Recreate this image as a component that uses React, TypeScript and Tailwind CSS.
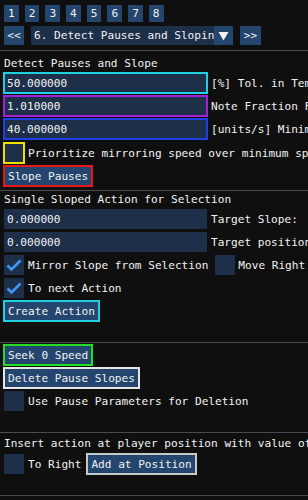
import React from "react";

const FRAME = "bg-[#1d2f49]";
const BTN = "bg-[#24456d]";

function Check() {
  return (
    <svg width="20" height="20" viewBox="0 0 20 20" className="block">
      <polyline points="3.5,10.5 7.5,14.5 16.5,5.5" fill="none" stroke="#4296fa" strokeWidth="2.6" strokeLinecap="butt" strokeLinejoin="miter" />
    </svg>
  );
}

function Box({ checked, outline }: { checked?: boolean; outline?: string }) {
  return (
    <div className={`w-[20px] h-[20px] shrink-0 ${FRAME} ${outline ?? ""}`}>
      {checked ? <Check /> : null}
    </div>
  );
}

function Btn({ children, outline, className }: { children: React.ReactNode; outline?: string; className?: string }) {
  return (
    <div className={`h-[20px] px-[4px] flex items-center whitespace-nowrap shrink-0 ${BTN} ${outline ?? ""} ${className ?? ""}`}>
      {children}
    </div>
  );
}

function Input({ value, label, outline, className }: { value: string; label: string; outline?: string; className?: string }) {
  return (
    <div className={`flex items-center h-[20px] whitespace-nowrap ${className ?? ""}`}>
      <div className={`w-[203px] h-[20px] shrink-0 pl-[3px] flex items-center ${FRAME} ${outline ?? ""}`}>{value}</div>
      <div className="ml-[4px] shrink-0">{label}</div>
    </div>
  );
}

function Sep({ className }: { className?: string }) {
  return <div className={`h-px -ml-[4px] w-[308px] bg-[#4a4a55] shrink-0 ${className ?? ""}`} />;
}

export default function App() {
  return (
    <div
      className="w-[308px] h-[500px] overflow-hidden bg-[#0f0f0f] text-[#f2f2f2] text-[11.1px] leading-[13px] flex flex-col pl-[4px]"
      style={{ fontFamily: '"DejaVu Sans Mono", monospace' }}
    >
      {/* tabs */}
      <div className="mt-[5px] flex gap-[6px] h-[17px]">
        {["1", "2", "3", "4", "5", "6", "7", "8"].map((t) => (
          <div key={t} className={`h-[17px] px-[4px] flex items-center ${BTN}`}>{t}</div>
        ))}
      </div>
      {/* nav */}
      <div className="mt-[4px] flex h-[19px] items-center whitespace-nowrap">
        <div className={`h-[19px] w-[20px] flex items-center justify-center ${BTN}`}>&lt;&lt;</div>
        <div className="ml-[7px] flex h-[19px] w-[202px]">
          <div className={`flex-1 overflow-hidden pl-[3px] flex items-center ${FRAME}`}>6. Detect Pauses and Slopin</div>
          <div className={`w-[19px] h-[19px] flex items-center justify-center ${BTN}`}>
            <svg width="11" height="10" viewBox="0 0 11 10"><polygon points="0.5,1 10.5,1 5.5,9.5" fill="#f2f2f2" /></svg>
          </div>
        </div>
        <div className={`ml-[7px] h-[19px] w-[21px] flex items-center justify-center ${BTN}`}>&gt;&gt;</div>
      </div>
      <Sep className="mt-[5px]" />
      <div className="mt-[6px] h-[13px] whitespace-nowrap">Detect Pauses and Slope</div>
      <Input className="mt-[3px]" value="50.000000" label="[%] Tol. in Tempo" outline="outline-2 outline-[#1fd0e0] -outline-offset-1" />
      <Input className="mt-[3px]" value="1.010000" label="Note Fraction For" outline="outline-2 outline-[#a81fd8] -outline-offset-1" />
      <Input className="mt-[3px]" value="40.000000" label="[units/s] Minimum" outline="outline-2 outline-[#1f3fe8] -outline-offset-1" />
      <div className="mt-[4px] flex items-center h-[20px] whitespace-nowrap">
        <Box outline="outline-2 outline-[#f0e000] -outline-offset-1" />
        <div className="ml-[4px]">Prioritize mirroring speed over minimum speed</div>
      </div>
      <div className="mt-[3px] flex">
        <Btn outline="outline-2 outline-[#e81818] -outline-offset-1">Slope Pauses</Btn>
      </div>
      <Sep className="mt-[4px]" />
      <div className="mt-[2px] h-[13px] whitespace-nowrap">Single Sloped Action for Selection</div>
      <Input className="mt-[3px]" value="0.000000" label="Target Slope:" />
      <Input className="mt-[3px]" value="0.000000" label="Target position" />
      <div className="mt-[3px] flex items-center h-[20px] whitespace-nowrap">
        <Box checked />
        <div className="ml-[4px]">Mirror Slope from Selection</div>
        <div className="ml-[7px]"><Box /></div>
        <div className="ml-[3px]">Move Right</div>
      </div>
      <div className="mt-[3px] flex items-center h-[20px] whitespace-nowrap">
        <Box checked />
        <div className="ml-[4px]">To next Action</div>
      </div>
      <div className="mt-[3px] flex">
        <Btn outline="outline-2 outline-[#1fd0e0] -outline-offset-1">Create Action</Btn>
      </div>
      <Sep className="mt-[21px]" />
      <div className="mt-[2px] flex">
        <Btn outline="outline-2 outline-[#22dd22] -outline-offset-1">Seek 0 Speed</Btn>
      </div>
      <div className="mt-[3px] flex">
        <Btn outline="outline-2 outline-[#e6e6e6] -outline-offset-1">Delete Pause Slopes</Btn>
      </div>
      <div className="mt-[3px] flex items-center h-[20px] whitespace-nowrap">
        <Box />
        <div className="ml-[4px]">Use Pause Parameters for Deletion</div>
      </div>
      <Sep className="mt-[21px]" />
      <div className="mt-[4px] h-[13px] whitespace-nowrap">Insert action at player position with value of</div>
      <div className="mt-[4px] flex items-center h-[20px] whitespace-nowrap">
        <Box />
        <div className="ml-[4px]">To Right</div>
        <div className="ml-[6px]">
          <Btn outline="outline-2 outline-[#c8c8c8] -outline-offset-1">Add at Position</Btn>
        </div>
      </div>
      <Sep className="mt-[21px]" />
    </div>
  );
}
